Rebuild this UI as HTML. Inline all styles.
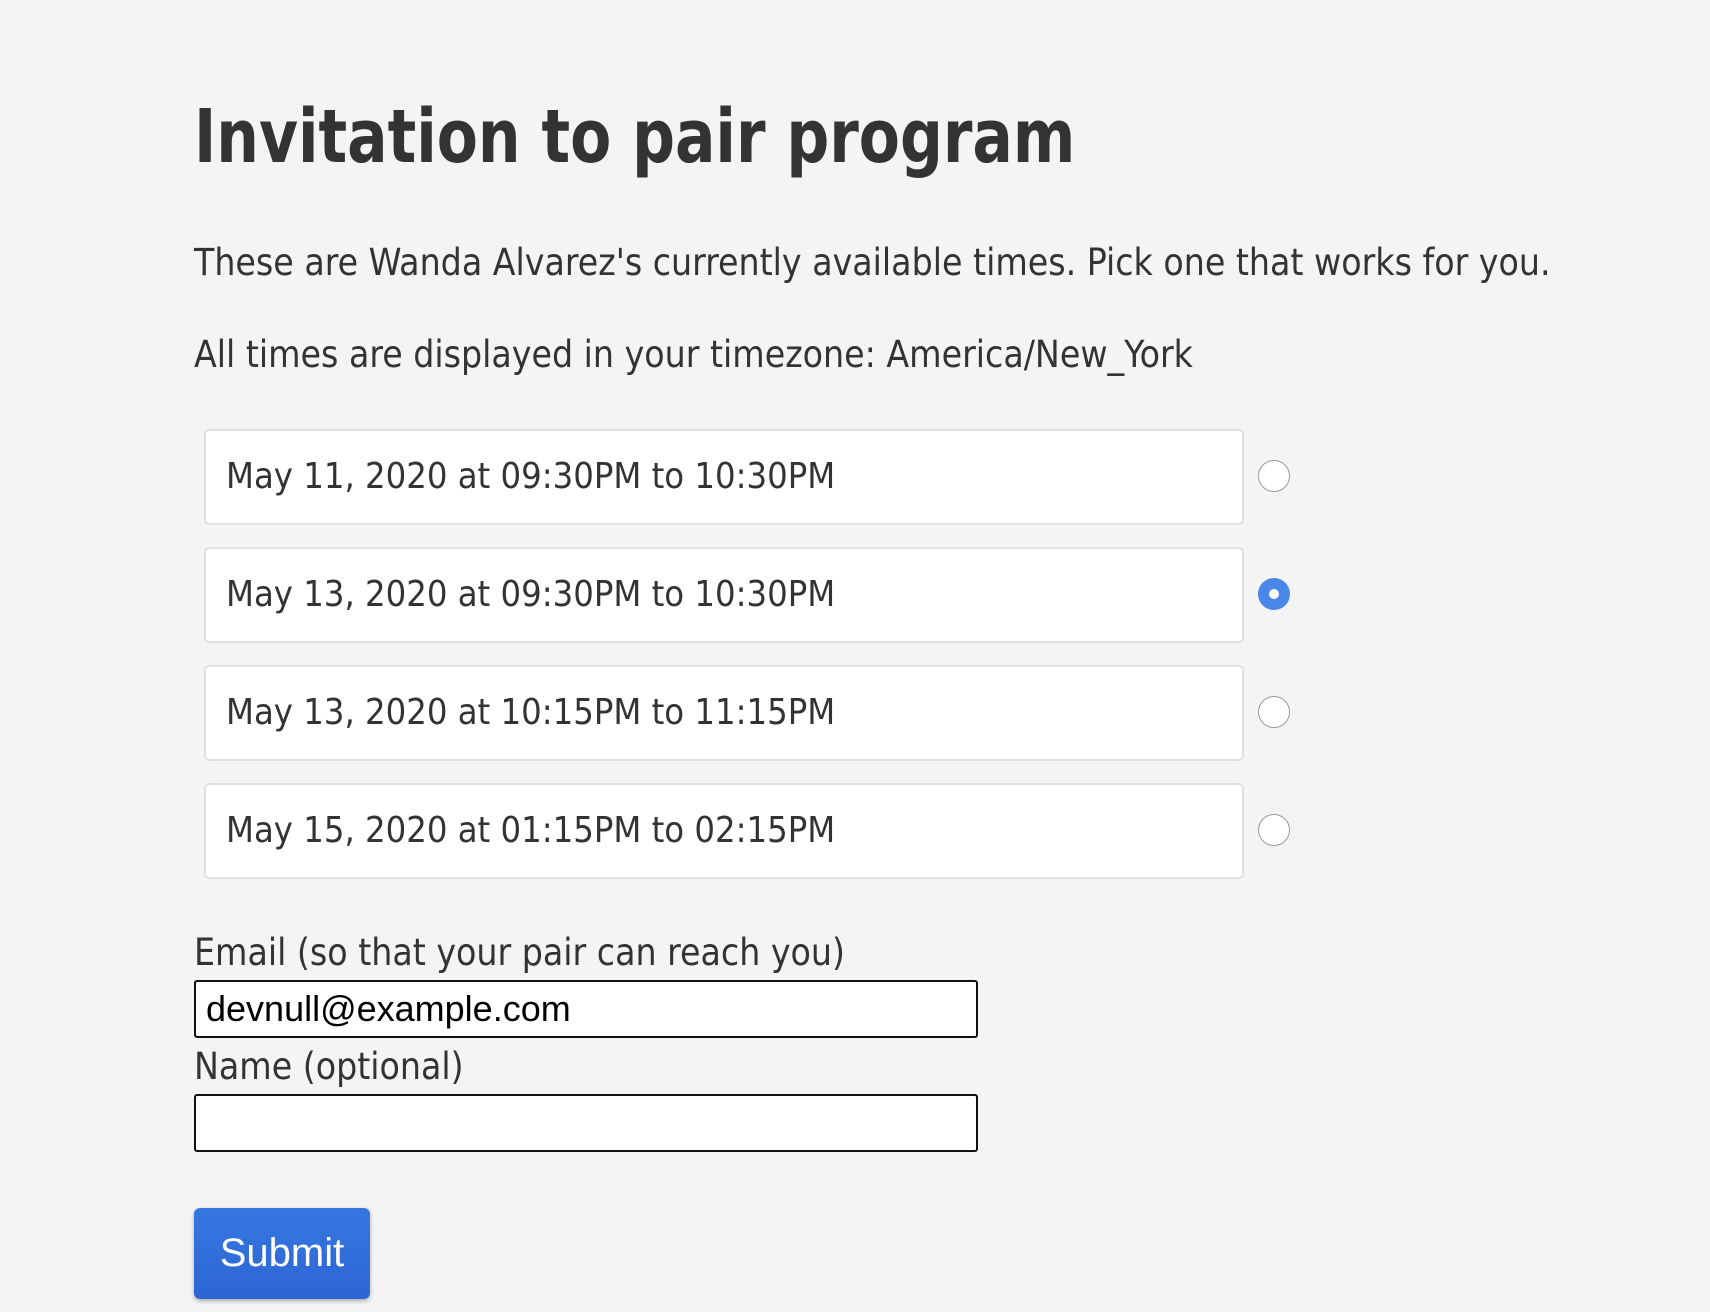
<!DOCTYPE html>
<html><head><style>
html,body{margin:0;padding:0;background:#f4f4f4;width:1710px;height:1312px;overflow:hidden}
body{font-family:"DejaVu Sans Condensed","Liberation Sans",sans-serif;color:#333;position:relative}
.a{position:absolute;white-space:nowrap}
h1{position:absolute;left:194px;top:94px;margin:0;font-size:74px;font-weight:bold;font-family:"DejaVu Sans Condensed","DejaVu Sans",sans-serif;transform-origin:0 0;transform:scaleX(0.9);white-space:nowrap}
.p{font-size:37px;left:194px}
.card{position:absolute;left:204px;width:1040px;height:96px;background:#fff;border:2px solid #e0e0e0;border-radius:5px;box-sizing:border-box}
.card span{position:absolute;left:20px;top:25px;font-size:36px}
.radio{position:absolute;left:1258px;width:32px;height:32px;border-radius:50%;border:1px solid #999;background:#fff;box-sizing:border-box}
.radio.on{background:#4a86e8;border:none}
.radio.on:after{content:"";position:absolute;left:11px;top:11px;width:10px;height:10px;border-radius:50%;background:#fff}
.inp{position:absolute;left:194px;width:784px;height:58px;border:2px solid #111;border-radius:3px;background:#fff;box-sizing:border-box}
.inp span{position:absolute;left:10px;top:6px;font-size:36px;font-family:"Liberation Sans",sans-serif;color:#000}
.btn{position:absolute;left:194px;top:1208px;width:176px;height:91px;background:linear-gradient(#3777e0,#2c66d4);border-radius:6px;box-shadow:0 2px 4px rgba(0,0,0,.3);color:#fff;font-family:"Liberation Sans",sans-serif;font-size:40px;text-align:center;line-height:91px}
</style></head><body>
<h1>Invitation to pair program</h1>
<div class="a p" style="top:241px">These are Wanda Alvarez's currently available times. Pick one that works for you.</div>
<div class="a p" style="top:333px">All times are displayed in your timezone: America/New_York</div>
<div class="card" style="top:429px"><span>May 11, 2020 at 09:30PM to 10:30PM</span></div>
<div class="radio" style="top:460px"></div>
<div class="card" style="top:547px"><span>May 13, 2020 at 09:30PM to 10:30PM</span></div>
<div class="radio on" style="top:578px"></div>
<div class="card" style="top:665px"><span>May 13, 2020 at 10:15PM to 11:15PM</span></div>
<div class="radio" style="top:696px"></div>
<div class="card" style="top:783px"><span>May 15, 2020 at 01:15PM to 02:15PM</span></div>
<div class="radio" style="top:814px"></div>
<div class="a p" style="top:931px">Email (so that your pair can reach you)</div>
<div class="inp" style="top:980px"><span>devnull@example.com</span></div>
<div class="a p" style="top:1045px">Name (optional)</div>
<div class="inp" style="top:1094px"></div>
<div class="btn">Submit</div>
</body></html>
